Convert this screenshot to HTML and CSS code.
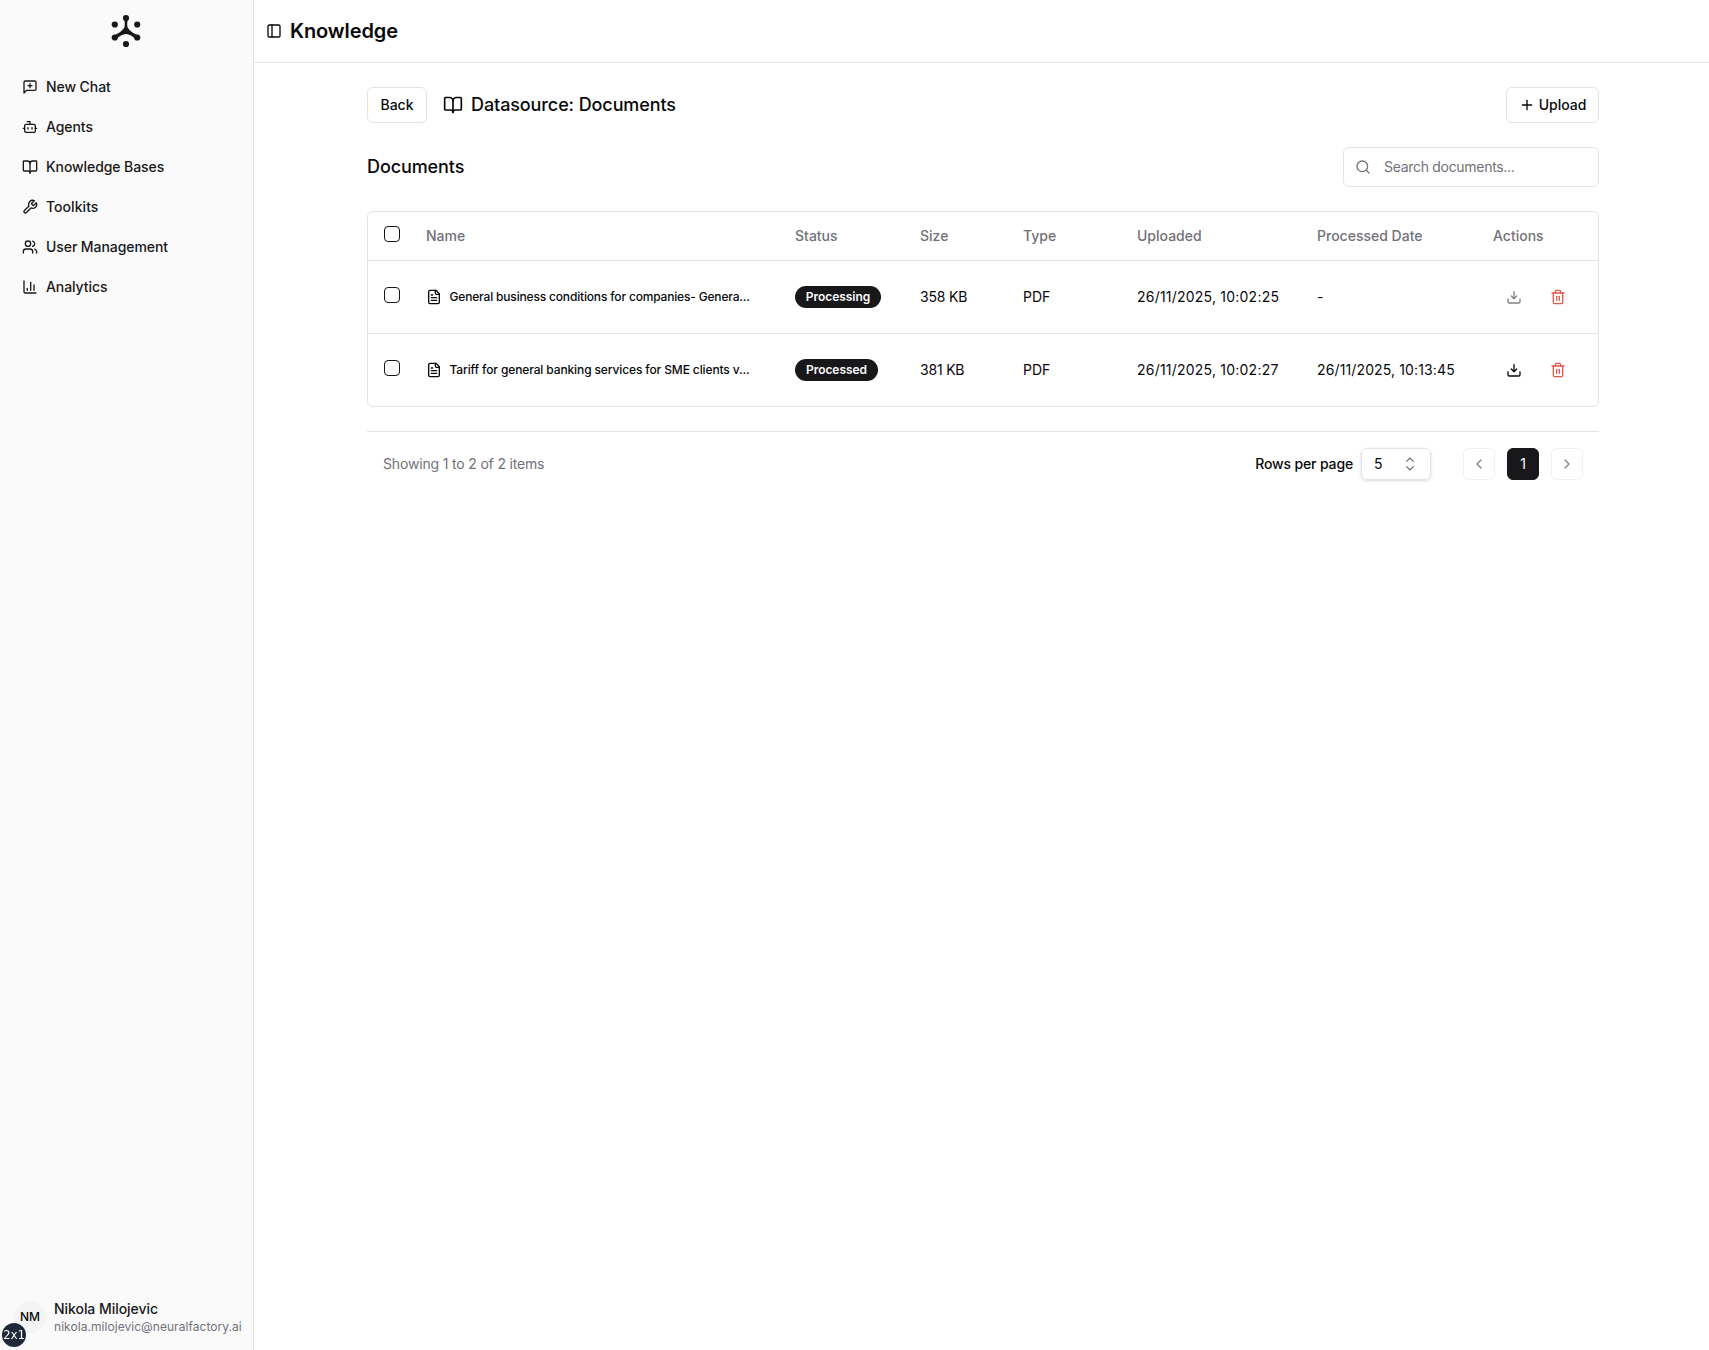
FILE: index.html
```html
<!DOCTYPE html>
<html lang="en">
<head>
    <meta charset="UTF-8">
    <meta name="viewport" content="width=device-width, initial-scale=1.0">
    <title>Knowledge</title>
    <link rel="stylesheet" href="styles.css">
</head>
<body>
    <!-- Shared icons -->
    <svg class="sprite" xmlns="http://www.w3.org/2000/svg">
        <symbol id="book" viewBox="0 0 24 24"><path d="M12 7v14"/><path d="M3 18a1 1 0 0 1-1-1V4a1 1 0 0 1 1-1h5a4 4 0 0 1 4 4 4 4 0 0 1 4-4h5a1 1 0 0 1 1 1v13a1 1 0 0 1-1 1h-6a3 3 0 0 0-3 3 3 3 0 0 0-3-3z"/></symbol>
        <symbol id="file" viewBox="0 0 24 24"><path d="M15 2H6a2 2 0 0 0-2 2v16a2 2 0 0 0 2 2h12a2 2 0 0 0 2-2V7Z"/><path d="M14 2v4a2 2 0 0 0 2 2h4"/><path d="M10 9H8"/><path d="M16 13H8"/><path d="M16 17H8"/></symbol>
        <symbol id="download" viewBox="0 0 24 24"><path d="M21 15v4a2 2 0 0 1-2 2H5a2 2 0 0 1-2-2v-4"/><path d="m8 10.5 4 4 4-4"/><path d="M12 14V4"/></symbol>
        <symbol id="trash" viewBox="0 0 24 24"><path d="M3 6h18"/><path d="M19 6v14c0 1-1 2-2 2H7c-1 0-2-1-2-2V6"/><path d="M8 6V4c0-1 1-2 2-2h4c1 0 2 1 2 2v2"/><path d="M10 11v6"/><path d="M14 11v6"/></symbol>
    </svg>

    <div class="app">
        <aside class="sidebar">
            <div class="logo">
                <svg viewBox="0 0 32 34" width="32" height="34">
                    <circle cx="16" cy="4" r="3.1"/>
                    <circle cx="4.8" cy="10.5" r="3.1"/>
                    <circle cx="27.2" cy="10.5" r="3.1"/>
                    <circle cx="4.8" cy="23.5" r="3.1"/>
                    <circle cx="27.2" cy="23.5" r="3.1"/>
                    <circle cx="16" cy="30" r="3.1"/>
                    <path d="M14.2 5h3.6C17 9 17 12 17.8 13.8 19.7 16.6 22.5 19.3 28 21.2L26.2 25.6C22.6 21.8 19.5 20.2 16 20 12.5 20.2 9.4 21.8 5.8 25.6L4 21.2C9.5 19.3 12.3 16.6 14.2 13.8 15 12 15 9 14.2 5Z"/>
                </svg>
            </div>
            <nav class="nav">
                <a class="nav-item"><svg class="icon" viewBox="0 0 24 24"><path d="M21 15a2 2 0 0 1-2 2H7l-4 4V5a2 2 0 0 1 2-2h14a2 2 0 0 1 2 2z"/><path d="M12 7v6"/><path d="M9 10h6"/></svg><span>New Chat</span></a>
                <a class="nav-item"><svg class="icon" viewBox="0 0 24 24"><path d="M12 8V4H8"/><rect width="16" height="12" x="4" y="8" rx="2"/><path d="M2 14h2"/><path d="M20 14h2"/><path d="M15 13v2"/><path d="M9 13v2"/></svg><span>Agents</span></a>
                <a class="nav-item"><svg class="icon"><use href="#book"/></svg><span>Knowledge Bases</span></a>
                <a class="nav-item"><svg class="icon" viewBox="0 0 24 24"><path d="M14.7 6.3a1 1 0 0 0 0 1.4l1.6 1.6a1 1 0 0 0 1.4 0l3.77-3.77a6 6 0 0 1-7.94 7.94l-6.91 6.91a2.12 2.12 0 0 1-3-3l6.91-6.91a6 6 0 0 1 7.94-7.94l-3.76 3.76z"/></svg><span class="toolkits">Toolkits</span></a>
                <a class="nav-item"><svg class="icon" viewBox="0 0 24 24"><path d="M16 21v-2a4 4 0 0 0-4-4H6a4 4 0 0 0-4 4v2"/><circle cx="9" cy="7" r="4"/><path d="M22 21v-2a4 4 0 0 0-3-3.87"/><path d="M16 3.13a4 4 0 0 1 0 7.75"/></svg><span>User Management</span></a>
                <a class="nav-item"><svg class="icon" viewBox="0 0 24 24"><path d="M3 3v16a2 2 0 0 0 2 2h16"/><path d="M18 17V9"/><path d="M13 17V5"/><path d="M8 17v-3"/></svg><span>Analytics</span></a>
            </nav>
            <div class="user">
                <div class="avatar">NM</div>
                <div class="user-info">
                    <div class="user-name">Nikola Milojevic</div>
                    <div class="user-email">nikola.milojevic@neuralfactory.ai</div>
                </div>
            </div>
        </aside>

        <main class="main">
            <header class="topbar">
                <svg class="icon" viewBox="0 0 24 24"><rect width="18" height="18" x="3" y="3" rx="2"/><path d="M9 3v18"/></svg>
                <h1>Knowledge</h1>
            </header>

            <div class="content">
                <div class="title-row">
                    <button class="btn back">Back</button>
                    <svg class="icon icon-lg"><use href="#book"/></svg>
                    <h2>Datasource: Documents</h2>
                    <button class="btn upload"><svg class="icon" viewBox="0 0 24 24"><path d="M5 12h14"/><path d="M12 5v14"/></svg><span>Upload</span></button>
                </div>

                <div class="search-row">
                    <h2>Documents</h2>
                    <div class="search">
                        <svg class="icon" viewBox="0 0 24 24"><circle cx="11" cy="11" r="8"/><path d="m21 21-4.3-4.3"/></svg>
                        <span>Search documents...</span>
                    </div>
                </div>

                <div class="table">
                    <div class="row head">
                        <div class="check"><span class="checkbox"></span></div>
                        <div>Name</div>
                        <div>Status</div>
                        <div>Size</div>
                        <div>Type</div>
                        <div>Uploaded</div>
                        <div>Processed Date</div>
                        <div>Actions</div>
                    </div>
                    <div class="row">
                        <div class="check"><span class="checkbox"></span></div>
                        <div class="name"><svg class="icon"><use href="#file"/></svg><span class="name-general">General business conditions for companies- Genera...</span></div>
                        <div><span class="badge processing">Processing</span></div>
                        <div class="size">358 KB</div>
                        <div>PDF</div>
                        <div class="date">26/11/2025, 10:02:25</div>
                        <div>-</div>
                        <div class="actions">
                            <svg class="icon disabled"><use href="#download"/></svg>
                            <svg class="icon danger"><use href="#trash"/></svg>
                        </div>
                    </div>
                    <div class="row">
                        <div class="check"><span class="checkbox"></span></div>
                        <div class="name"><svg class="icon"><use href="#file"/></svg><span class="name-tariff">Tariff for general banking services for SME clients v...</span></div>
                        <div><span class="badge processed">Processed</span></div>
                        <div class="size">381 KB</div>
                        <div>PDF</div>
                        <div class="date">26/11/2025, 10:02:27</div>
                        <div class="date-processed">26/11/2025, 10:13:45</div>
                        <div class="actions">
                            <svg class="icon"><use href="#download"/></svg>
                            <svg class="icon danger"><use href="#trash"/></svg>
                        </div>
                    </div>
                </div>

                <div class="pagination">
                    <span class="summary">Showing 1 to 2 of 2 items</span>
                    <span class="rows-label">Rows per page</span>
                    <div class="select">
                        <span>5</span>
                        <svg class="icon" viewBox="0 0 24 24"><path d="m7 16 5 5 5-5" /><path d="m7 8 5-5 5 5"/></svg>
                    </div>
                    <div class="pages">
                        <button class="page disabled"><svg class="icon" viewBox="0 0 24 24"><path d="m15 18-6-6 6-6"/></svg></button>
                        <button class="page active">1</button>
                        <button class="page disabled"><svg class="icon" viewBox="0 0 24 24"><path d="m9 18 6-6-6-6"/></svg></button>
                    </div>
                </div>
            </div>
        </main>
    </div>

    <div class="breakpoint">2x1</div>
</body>
</html>
```
FILE: styles.css
```css
* {
    box-sizing: border-box;
}

body {
    margin: 0;
    font-family: Inter, "Liberation Sans", sans-serif;
    font-size: 14px;
    line-height: 20px;
    color: #09090b;
    background-color: #fff;
}

h1, h2 {
    margin: 0;
}

button {
    font: inherit;
    color: inherit;
    letter-spacing: inherit;
    padding: 0;
}

.sprite {
    display: none;
}

.icon {
    width: 16px;
    height: 16px;
    flex-shrink: 0;
    fill: none;
    stroke: currentColor;
    stroke-width: 2;
    stroke-linecap: round;
    stroke-linejoin: round;
}

.icon-lg {
    width: 20px;
    height: 20px;
}

.app {
    display: flex;
    height: 100vh;
}

/* Sidebar */
.sidebar {
    display: flex;
    flex-direction: column;
    width: 254px;
    flex-shrink: 0;
    background-color: #fafafa;
    border-right: 1px solid #e4e4e7;
}

.logo {
    display: flex;
    justify-content: center;
    padding: 14px 1px 0 0;
    height: 67px;
    fill: #18181b;
}

.nav {
    display: flex;
    flex-direction: column;
}

.nav-item {
    display: flex;
    align-items: center;
    gap: 8px;
    height: 40px;
    padding-left: 22px;
    font-weight: 500;
    letter-spacing: -0.08px;
    color: #18181b;
}

.toolkits {
    letter-spacing: 0.05px;
}

.user {
    display: flex;
    align-items: center;
    gap: 8px;
    margin-top: auto;
    padding: 0 0 15px 14px;
}

.avatar {
    display: flex;
    align-items: center;
    justify-content: center;
    width: 32px;
    height: 32px;
    border-radius: 50%;
    background-color: #f4f4f5;
    font-size: 12px;
    font-weight: 500;
}

.user-info {
    padding-top: 2px;
}

.user-name {
    line-height: 18px;
    font-weight: 500;
    letter-spacing: -0.05px;
    color: #18181b;
}

.user-email {
    font-size: 12px;
    line-height: 17px;
    letter-spacing: 0.05px;
    color: #71717a;
}

/* Main area */
.main {
    flex: 1;
}

.topbar {
    display: flex;
    align-items: center;
    gap: 8px;
    height: 63px;
    padding-left: 12px;
    border-bottom: 1px solid #e4e4e7;
}

.topbar h1 {
    font-size: 20px;
    font-weight: 600;
    letter-spacing: -0.1px;
}

.content {
    width: 1232px;
    margin: 24px 0 0 113px;
}

.content h2 {
    font-size: 18px;
    font-weight: 500;
    letter-spacing: -0.1px;
}

.title-row {
    display: flex;
    align-items: center;
    height: 36px;
}

.btn {
    display: flex;
    align-items: center;
    justify-content: center;
    height: 36px;
    border: 1px solid #e4e4e7;
    border-radius: 6px;
    background-color: #fff;
    font-weight: 500;
}

.back {
    width: 60px;
    margin-right: 16px;
}

.title-row h2 {
    margin-left: 8px;
}

.upload {
    width: 93px;
    gap: 4px;
    margin-left: auto;
}

.search-row {
    display: flex;
    align-items: center;
    justify-content: space-between;
    margin: 24px 0;
}

.search {
    display: flex;
    align-items: center;
    gap: 13px;
    width: 256px;
    height: 40px;
    padding-left: 11px;
    border: 1px solid #e4e4e7;
    border-radius: 6px;
    letter-spacing: -0.3px;
    color: #71717a;
}

/* Documents table */
.table {
    border: 1px solid #e4e4e7;
    border-radius: 6px;
}

.row {
    display: grid;
    grid-template-columns: 42px 369px 125px 103px 114px 180px 176px 121px;
    align-items: center;
    height: 73px;
    border-bottom: 1px solid #e4e4e7;
}

.row:last-child {
    height: 72px;
    border-bottom: none;
}

.row > div {
    padding-left: 16px;
    white-space: nowrap;
}

.head {
    height: 49px;
    font-weight: 500;
    color: #71717a;
}

.checkbox {
    display: block;
    width: 16px;
    height: 16px;
    margin-bottom: 4px;
    border: 1px solid #18181b;
    border-radius: 4px;
}

.name {
    display: flex;
    align-items: center;
    gap: 7.5px;
    font-size: 12px;
    font-weight: 500;
}

.name-general {
    letter-spacing: -0.17px;
}

.name-tariff {
    letter-spacing: -0.12px;
}

.size {
    letter-spacing: -0.2px;
}

.date {
    letter-spacing: 0.22px;
}

.date-processed {
    letter-spacing: 0.13px;
}

.badge {
    display: inline-flex;
    align-items: center;
    justify-content: center;
    height: 22px;
    border-radius: 11px;
    background-color: #18181b;
    color: #fafafa;
    font-size: 12px;
    font-weight: 600;
    letter-spacing: -0.05px;
    vertical-align: middle;
}

.processing {
    width: 86px;
}

.processed {
    width: 83px;
}

.actions {
    display: flex;
    gap: 28px;
}

.row > .actions {
    padding-left: 29px;
}

.disabled {
    opacity: 0.5;
}

.danger {
    color: #e0584e;
}

/* Pagination */
.pagination {
    display: flex;
    align-items: center;
    margin-top: 24px;
    padding: 16px 16px 0;
    border-top: 1px solid #e4e4e7;
}

.summary {
    letter-spacing: -0.17px;
    color: #71717a;
}

.rows-label {
    margin-left: auto;
    font-weight: 500;
    letter-spacing: -0.14px;
}

.select {
    display: flex;
    align-items: center;
    justify-content: space-between;
    width: 70px;
    height: 32px;
    margin-left: 8px;
    padding: 0 12px;
    border: 1px solid #e4e4e7;
    border-radius: 6px;
    box-shadow: 0 1px 3px rgba(0, 0, 0, 0.15);
}

.select .icon {
    opacity: 0.6;
    stroke-width: 1.6;
}

.pages {
    display: flex;
    gap: 12px;
    margin-left: 32px;
}

.page {
    display: flex;
    align-items: center;
    justify-content: center;
    width: 32px;
    height: 32px;
    border: 1px solid #e4e4e7;
    border-radius: 6px;
    background-color: #fff;
}

.active {
    background-color: #18181b;
    border-color: #18181b;
    color: #fafafa;
}

/* Breakpoint indicator */
.breakpoint {
    position: fixed;
    left: 2px;
    bottom: 3px;
    display: flex;
    align-items: center;
    justify-content: center;
    width: 24px;
    height: 24px;
    border-radius: 50%;
    background-color: #1f2937;
    color: #fff;
    font-family: "DejaVu Sans Mono", monospace;
    font-size: 12px;
}
```
